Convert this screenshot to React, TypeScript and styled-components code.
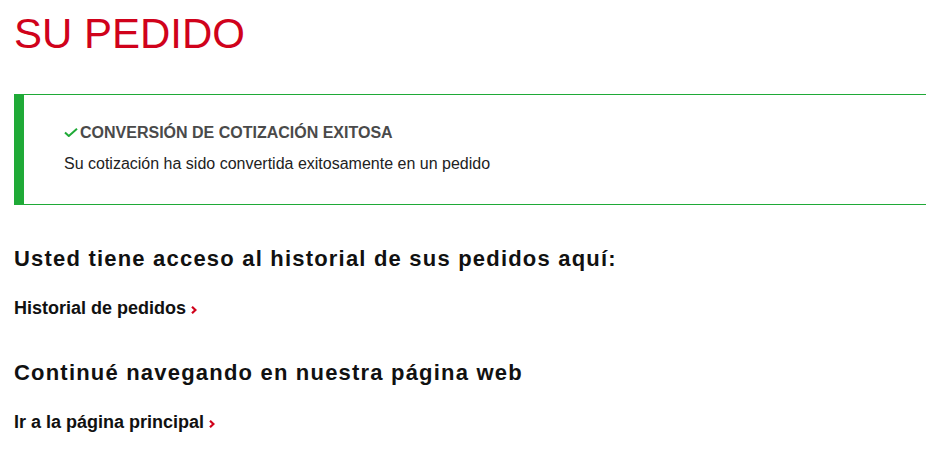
import styled, { createGlobalStyle } from "styled-components";

const GlobalStyle = createGlobalStyle`
	html, body {
		margin: 0;
		padding: 0;
		background: #ffffff;
		overflow: hidden;
	}
	body {
		font-family: "Liberation Sans", Arial, sans-serif;
		color: #111111;
	}
`;

const Page = styled.main`
	width: 960px;
	padding: 10px 0 0 14px;
	box-sizing: border-box;
`;

const Title = styled.h1`
	margin: 0 0 36px;
	font-size: 42px;
	font-weight: 400;
	line-height: 48px;
	color: #d0021b;
`;

const Alert = styled.section`
	border: 1px solid #1faa37;
	border-left: 10px solid #1faa37;
	border-right: none;
	padding: 29px 40px 31px;
`;

const AlertTitle = styled.h3`
	margin: 0 0 13px;
	font-size: 16px;
	font-weight: 700;
	line-height: 18px;
	color: #4a4a4a;

	svg {
		margin-right: 2px;
		vertical-align: 1px;
	}
`;

const AlertText = styled.p`
	margin: 0;
	font-size: 16px;
	line-height: 18px;
	color: #222222;
`;

const Section = styled.section`
	margin-top: 41px;
`;

const Heading = styled.h2`
	margin: 0 0 25px;
	font-size: 22px;
	font-weight: 700;
	letter-spacing: 1.2px;
	line-height: 26px;
	color: #111111;
`;

const NavLink = styled.a`
	display: block;
	width: fit-content;
	font-size: 18px;
	font-weight: 700;
	line-height: 22px;
	color: #111111;
	text-decoration: none;

	svg {
		margin-left: 5px;
	}
`;

const Check = () => (
	<svg width="14" height="9" viewBox="0 0 14 9" aria-hidden="true">
		<path d="M1 4.5 L4.8 8 L13 0.8" fill="none" stroke="#1faa37" strokeWidth="2" />
	</svg>
);

const Chevron = () => (
	<svg width="6" height="8" viewBox="0 0 6 8" aria-hidden="true">
		<path d="M1 0.8 L4.4 4 L1 7.2" fill="none" stroke="#d0021b" strokeWidth="2.2" />
	</svg>
);

const App = () => {
	return (
		<>
			<GlobalStyle />
			<Page>
				<Title>SU PEDIDO</Title>

				<Alert>
					<AlertTitle>
						<Check />
						CONVERSIÓN DE COTIZACIÓN EXITOSA
					</AlertTitle>
					<AlertText>Su cotización ha sido convertida exitosamente en un pedido</AlertText>
				</Alert>

				<Section>
					<Heading>Usted tiene acceso al historial de sus pedidos aquí:</Heading>
					<NavLink href="#">
						Historial de pedidos
						<Chevron />
					</NavLink>
				</Section>

				<Section>
					<Heading>Continué navegando en nuestra página web</Heading>
					<NavLink href="#">
						Ir a la página principal
						<Chevron />
					</NavLink>
				</Section>
			</Page>
		</>
	);
};

export default App;
